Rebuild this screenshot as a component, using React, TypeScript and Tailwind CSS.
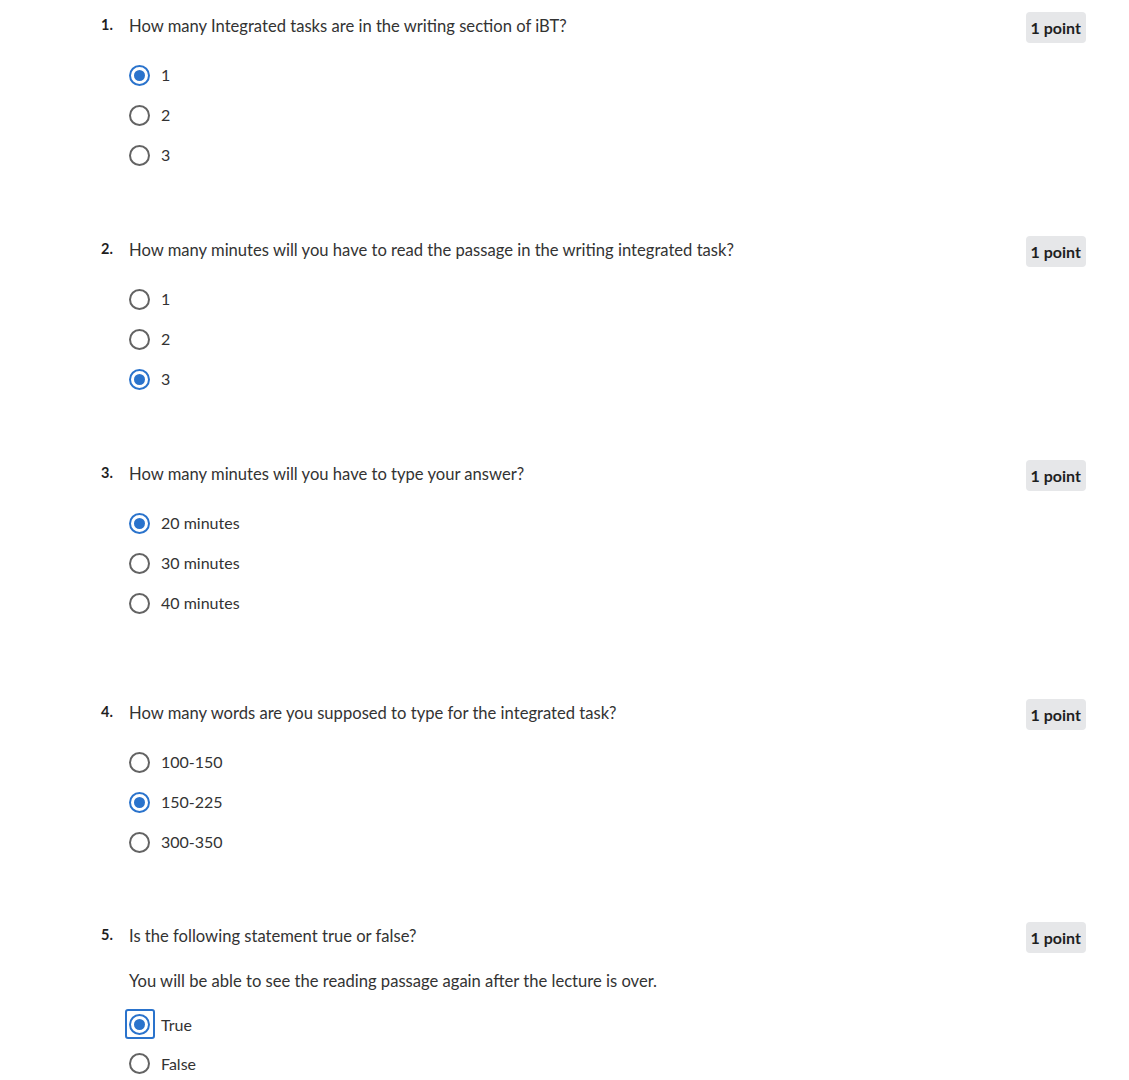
import React from "react";

type Q = {
  n: number;
  text: string;
  statement?: string;
  options: string[];
  selected: number;
  focused?: boolean;
  gapAfter: string;
};

const questions: Q[] = [
  { n: 1, text: "How many Integrated tasks are in the writing section of iBT?", options: ["1", "2", "3"], selected: 0, gapAfter: "mb-[63px]" },
  { n: 2, text: "How many minutes will you have to read the passage in the writing integrated task?", options: ["1", "2", "3"], selected: 2, gapAfter: "mb-[63px]" },
  { n: 3, text: "How many minutes will you have to type your answer?", options: ["20 minutes", "30 minutes", "40 minutes"], selected: 0, gapAfter: "mb-[78px]" },
  { n: 4, text: "How many words are you supposed to type for the integrated task?", options: ["100-150", "150-225", "300-350"], selected: 1, gapAfter: "mb-[62px]" },
  {
    n: 5,
    text: "Is the following statement true or false?",
    statement: "You will be able to see the reading passage again after the lecture is over.",
    options: ["True", "False"],
    selected: 0,
    focused: true,
    gapAfter: "mb-0",
  },
];

function Radio({ checked, focused }: { checked: boolean; focused?: boolean }) {
  const circle = checked ? (
    <span className="w-[21px] h-[21px] rounded-full border-2 border-[#2a73cc] flex items-center justify-center bg-white">
      <span className="w-[11px] h-[11px] rounded-full bg-[#2a73cc]" />
    </span>
  ) : (
    <span className="w-[21px] h-[21px] rounded-full border-2 border-[#636363] bg-white" />
  );
  return (
    <span className="relative w-[21px] h-[21px] flex items-center justify-center">
      {focused && (
        <span className="absolute left-[-4px] top-[-5px] w-[30px] h-[30px] rounded-[3px] border-2 border-[#2a73cc]" />
      )}
      {circle}
    </span>
  );
}

export default function App() {
  return (
    <div
      className="bg-white min-h-[1080px] pl-[101px] pr-[43px] pt-[14px] text-[#333333]"
      style={{ fontFamily: "Lato, 'Liberation Sans', sans-serif" }}
    >
      {questions.map((q) => (
        <div key={q.n} className={`flex items-start ${q.gapAfter}`}>
          <div className="w-[28px] text-[14.5px] font-bold leading-[22px] text-[#1f1f1f]">{q.n}.</div>
          <div className="flex-1">
            <div className="text-[16.6px] leading-[24px]">{q.text}</div>
            {q.statement && <div className="mt-[21px] text-[16.6px] leading-[24px]">{q.statement}</div>}
            <div className={q.statement ? "mt-[12px]" : "mt-[17px]"}>
              {q.options.map((o, i) => (
                <div key={o} className={`flex items-center ${q.statement ? "h-[39px]" : "h-[40px]"}`}>
                  <Radio checked={i === q.selected} focused={q.focused && i === q.selected} />
                  <span className="ml-[11px] text-[16px] text-[#333333]">{o}</span>
                </div>
              ))}
            </div>
          </div>
          <div className="mt-[-2px] h-[31px] px-[5px] rounded-[4px] bg-[#e6e7e9] flex items-center text-[16px] font-bold text-[#1f1f1f]">
            1 point
          </div>
        </div>
      ))}
    </div>
  );
}
